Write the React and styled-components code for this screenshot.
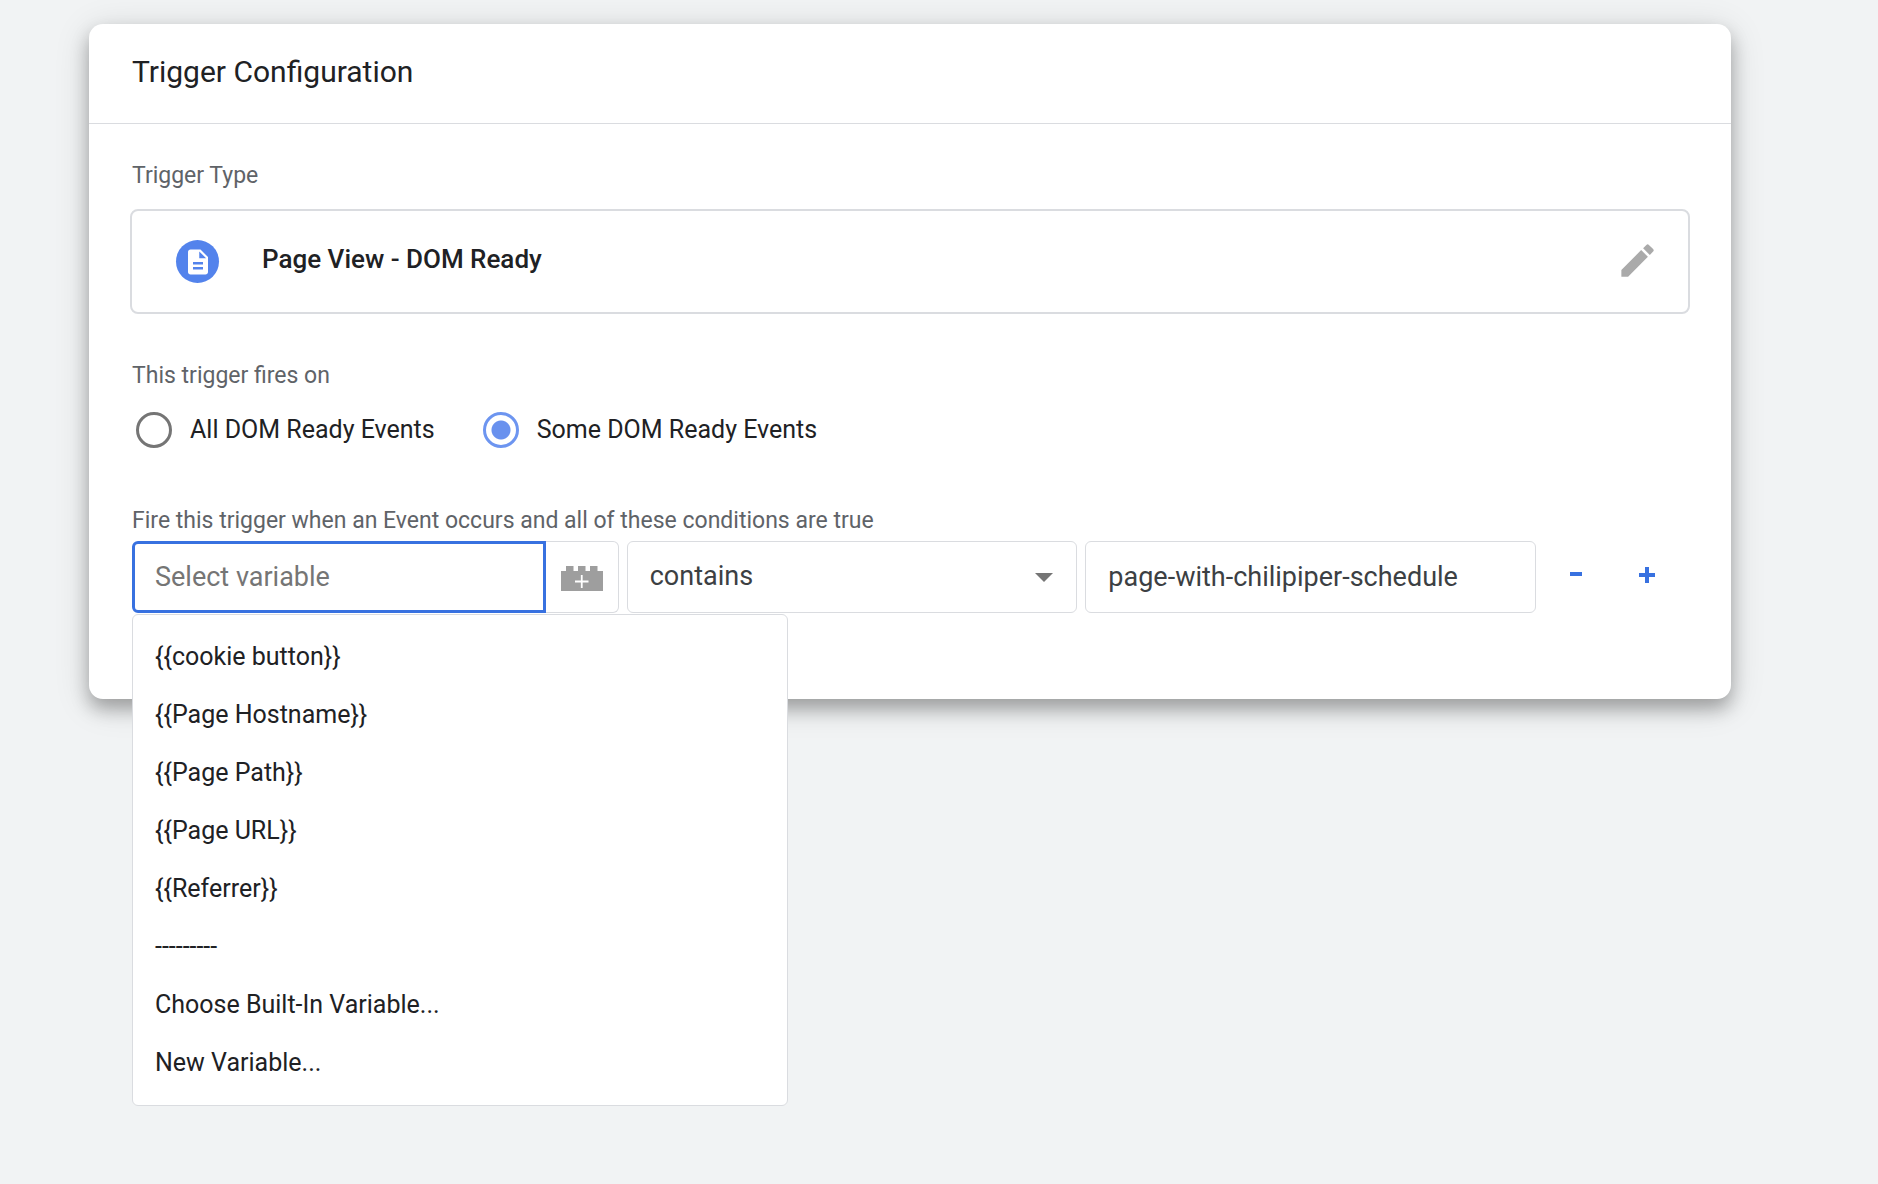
import React, { useState } from 'react';
import styled, { createGlobalStyle } from 'styled-components';
import { MdDescription, MdEdit } from 'react-icons/md';

const GlobalStyle = createGlobalStyle`
  * {
    box-sizing: border-box;
  }
  body {
    margin: 0;
    background: #f1f3f4;
    color: #202124;
    font-family: Roboto, "Liberation Sans", sans-serif;
  }
  button, input, select {
    font-family: inherit;
  }
`;

const Page = styled.main`
  min-height: 100vh;
  padding: 24px 147px 78px 89px;
`;

const Card = styled.section`
  background: #fff;
  border-radius: 14px;
  box-shadow: 0 10px 18px rgba(0, 0, 0, 0.28), 0 6px 36px rgba(0, 0, 0, 0.14);
`;

const CardHeader = styled.header`
  border-bottom: 1px solid #dadce0;
  padding: 30px 43px 33px;
`;

const Title = styled.h1`
  margin: 0;
  font-size: 30px;
  font-weight: 400;
  line-height: 36px;
`;

const CardBody = styled.div`
  padding: 40px 41px 86px;
`;

const SectionLabel = styled.h2`
  margin: 0 0 ${props => props.$space}px 2px;
  color: #5f6368;
  font-size: 23px;
  font-weight: 400;
  line-height: 24px;
`;

const TypeBox = styled.div`
  display: flex;
  align-items: center;
  margin-bottom: 50px;
  padding: 28px 29px 28px 44px;
  border: 2px solid #dadce0;
  border-radius: 8px;
`;

const TypeIcon = styled.span`
  display: flex;
  align-items: center;
  justify-content: center;
  width: 43px;
  height: 43px;
  margin-right: 43px;
  border-radius: 50%;
  background: #5383ec;
  color: #fff;
`;

const TypeName = styled.span`
  flex: 1;
  padding-bottom: 6px;
  font-size: 26px;
  font-weight: 500;
  line-height: 32px;
`;

const EditButton = styled.button`
  display: flex;
  padding: 0 0 2px;
  border: 0;
  background: none;
  color: #aaa;
  cursor: pointer;
`;

const RadioRow = styled.div`
  display: flex;
  gap: 48px;
  margin: 0 0 61px 6px;
`;

const RadioLabel = styled.label`
  display: flex;
  align-items: center;
  gap: 18px;
  font-size: 25px;
  line-height: 36px;
`;

const Radio = styled.input`
  appearance: none;
  width: 36px;
  height: 36px;
  margin: 0;
  border: 3px solid #757575;
  border-radius: 50%;
  &:checked {
    border-color: #6d95f0;
    background: radial-gradient(circle, #6991ee 9px, transparent 10px);
  }
`;

const ConditionRow = styled.div`
  display: grid;
  grid-template-columns: 27fr 25fr 25fr 146px;
  gap: 8px;
  margin-left: 2px;
`;

const VariablePicker = styled.div`
  position: relative;
  display: flex;
`;

const TextField = styled.input`
  min-width: 0;
  width: 100%;
  height: 72px;
  padding: 0 22px;
  border: 1px solid #dadce0;
  border-radius: 6px;
  background: #fff;
  color: #3c4043;
  font-size: 27px;
  outline: none;
`;

const VariableInput = styled(TextField)`
  flex: 1;
  padding: 0 20px;
  border: 3px solid #3871e0;
  border-radius: 6px 0 0 6px;
  &::placeholder {
    color: #757575;
  }
`;

const BrickButton = styled.button`
  display: flex;
  align-items: center;
  justify-content: center;
  width: 73px;
  height: 72px;
  padding: 2px 0 0;
  border: 1px solid #dadce0;
  border-left: 0;
  border-radius: 0 6px 6px 0;
  background: #fff;
`;

const VariableMenu = styled.ul`
  position: absolute;
  z-index: 1;
  top: 73px;
  left: 0;
  width: 656px;
  margin: 0;
  padding: 13px 0;
  border: 1px solid #dadce0;
  border-radius: 6px;
  background: #fff;
  list-style: none;
`;

const MenuItem = styled.li`
  padding: 0 22px;
  font-size: 25px;
  line-height: 58px;
  cursor: pointer;
`;

const SelectBox = styled.div`
  position: relative;
`;

const Select = styled.select`
  appearance: none;
  width: 100%;
  height: 72px;
  padding: 0 60px 2px 22px;
  border: 1px solid #dadce0;
  border-radius: 6px;
  background: #fff;
  color: #3c4043;
  font-size: 27px;
`;

const SelectArrow = styled.svg`
  position: absolute;
  top: 32px;
  right: 24px;
  pointer-events: none;
`;

const Actions = styled.div`
  display: flex;
  gap: 7px;
`;

const ActionButton = styled.button`
  display: flex;
  align-items: center;
  justify-content: center;
  width: 64px;
  height: 68px;
  padding: 0;
  border: 0;
  background: none;
  cursor: pointer;
`;

const variables = [
  '{{cookie button}}',
  '{{Page Hostname}}',
  '{{Page Path}}',
  '{{Page URL}}',
  '{{Referrer}}',
  '---------',
  'Choose Built-In Variable...',
  'New Variable...',
];

const fireOptions = ['All DOM Ready Events', 'Some DOM Ready Events'];

function BrickIcon() {
  return (
    <svg width="42" height="25" viewBox="0 0 42 25" aria-hidden="true">
      <path fill="#9e9e9e" d="M0 5h5V0h7.5v5H17V0h7.5v5H29V0h7.5v5H42v20H0z" />
      <path stroke="#fff" strokeWidth="1.8" d="M14 15.5h13.5M20.75 9v13" />
    </svg>
  );
}

function App() {
  const [fireOn, setFireOn] = useState(fireOptions[1]);
  const [variable, setVariable] = useState('');
  const [value, setValue] = useState('page-with-chilipiper-schedule');

  return (
    <Page>
      <GlobalStyle />
      <Card>
        <CardHeader>
          <Title>Trigger Configuration</Title>
        </CardHeader>
        <CardBody>
          <SectionLabel $space={21}>Trigger Type</SectionLabel>
          <TypeBox>
            <TypeIcon><MdDescription size={30} /></TypeIcon>
            <TypeName>Page View - DOM Ready</TypeName>
            <EditButton aria-label="Edit trigger type"><MdEdit size={43} /></EditButton>
          </TypeBox>

          <SectionLabel $space={24} id="fires-on">This trigger fires on</SectionLabel>
          <RadioRow role="radiogroup" aria-labelledby="fires-on">
            {fireOptions.map(option => (
              <RadioLabel key={option}>
                <Radio
                  type="radio"
                  name="fireOn"
                  checked={fireOn === option}
                  onChange={() => setFireOn(option)}
                />
                {option}
              </RadioLabel>
            ))}
          </RadioRow>

          <SectionLabel $space={8}>
            Fire this trigger when an Event occurs and all of these conditions are true
          </SectionLabel>
          <ConditionRow>
            <VariablePicker>
              <VariableInput
                aria-label="Variable"
                placeholder="Select variable"
                value={variable}
                onChange={e => setVariable(e.target.value)}
              />
              <BrickButton aria-label="Insert variable"><BrickIcon /></BrickButton>
              <VariableMenu role="listbox" aria-label="Variables">
                {variables.map(name => (
                  <MenuItem key={name} role="option" onClick={() => setVariable(name)}>{name}</MenuItem>
                ))}
              </VariableMenu>
            </VariablePicker>
            <SelectBox>
              <Select aria-label="Operator" defaultValue="contains">
                <option>contains</option>
                <option>equals</option>
                <option>starts with</option>
              </Select>
              <SelectArrow width="18" height="9" viewBox="0 0 18 9" aria-hidden="true">
                <path fill="#757575" d="M0 0h18L9 9z" />
              </SelectArrow>
            </SelectBox>
            <TextField aria-label="Value" value={value} onChange={e => setValue(e.target.value)} />
            <Actions>
              <ActionButton aria-label="Remove condition">
                <svg width="16" height="16" viewBox="0 0 16 16">
                  <path fill="#3871e0" d="M2 5h12v4H2z" />
                </svg>
              </ActionButton>
              <ActionButton aria-label="Add condition">
                <svg width="16" height="16" viewBox="0 0 16 16">
                  <path fill="#3871e0" d="M6 0h4v6h6v4h-6v6H6v-6H0V6h6z" />
                </svg>
              </ActionButton>
            </Actions>
          </ConditionRow>
        </CardBody>
      </Card>
    </Page>
  );
}

export default App;
